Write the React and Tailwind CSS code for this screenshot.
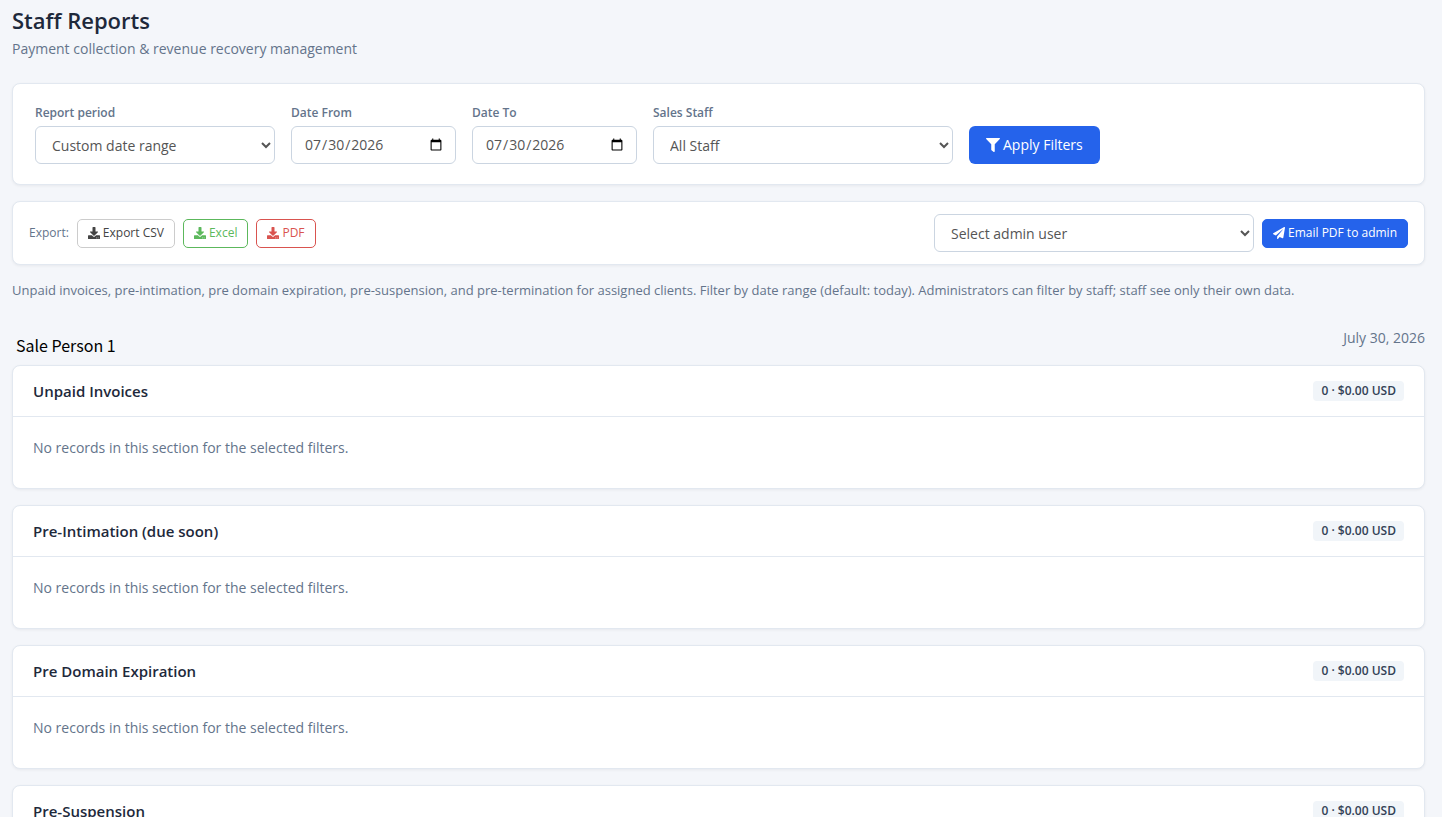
import { useState } from "react";
import { FaDownload, FaFilter, FaPaperPlane } from "react-icons/fa";

const sections = [
    { id: 'unpaid', title: 'Unpaid Invoices', total: '0 · $0.00 USD' },
    { id: 'pre-intimation', title: 'Pre-Intimation (due soon)', total: '0 · $0.00 USD' },
    { id: 'pre-domain', title: 'Pre Domain Expiration', total: '0 · $0.00 USD' },
    { id: 'pre-suspension', title: 'Pre-Suspension', total: '0 · $0.00 USD' },
]

const cardClass = "bg-white border border-[#e2e8f0] rounded-lg shadow-[0_1px_3px_rgba(15,23,42,0.06)]"
const labelClass = "text-xs leading-[18px] font-semibold text-[#64748b]"
const selectClass = "h-[38px] w-full rounded-md border border-[#cbd5e1] bg-white px-3 text-sm text-[#555]"
const dateClass = "h-[38px] w-full rounded-md border border-[#cbd5e1] bg-white pr-[10px] pl-3 text-sm text-[#555]"
const smallButton = "flex h-[29px] items-center gap-[3px] rounded-[5px] border px-[10px] text-xs"

const Field = ({ id, label, className, children }) => (
    <div className={`flex flex-col gap-1 ${className}`}>
        <label htmlFor={id} className={labelClass}>{label}</label>
        {children}
    </div>
)

const Filters = () => {
    const [period, setPeriod] = useState('custom')
    const [dateFrom, setDateFrom] = useState('2026-07-30')
    const [dateTo, setDateTo] = useState('2026-07-30')
    const [staff, setStaff] = useState('all')

    return (
        <form className={`${cardClass} flex flex-wrap items-end gap-4 px-[22px] py-5`} onSubmit={(e) => e.preventDefault()}>
            <Field id="period" label="Report period" className="w-60">
                <select id="period" className={selectClass} value={period} onChange={(e) => setPeriod(e.target.value)}>
                    <option value="custom">Custom date range</option>
                    <option value="today">Today</option>
                    <option value="month">This month</option>
                </select>
            </Field>
            <Field id="date-from" label="Date From" className="w-[165px]">
                <input id="date-from" type="date" className={dateClass} value={dateFrom} onChange={(e) => setDateFrom(e.target.value)} />
            </Field>
            <Field id="date-to" label="Date To" className="w-[165px]">
                <input id="date-to" type="date" className={dateClass} value={dateTo} onChange={(e) => setDateTo(e.target.value)} />
            </Field>
            <Field id="staff" label="Sales Staff" className="w-[300px]">
                <select id="staff" className={selectClass} value={staff} onChange={(e) => setStaff(e.target.value)}>
                    <option value="all">All Staff</option>
                    <option value="1">Sale Person 1</option>
                </select>
            </Field>
            <button type="submit" className="flex h-[38px] items-center gap-[3px] rounded-md bg-[#2563eb] px-[17px] text-sm font-medium text-white">
                <FaFilter />
                Apply Filters
            </button>
        </form>
    )
}

const ExportBar = () => {
    const [admin, setAdmin] = useState('')

    return (
        <div className={`${cardClass} mt-4 flex flex-wrap items-center justify-between gap-2 px-4 py-3`}>
            <div className="flex items-center gap-2">
                <span className="text-xs text-[#64748b]">Export:</span>
                <button type="button" className={`${smallButton} border-[#ccc] text-[#444]`}><FaDownload />Export CSV</button>
                <button type="button" className={`${smallButton} border-[#5cb85c] text-[#5cb85c]`}><FaDownload />Excel</button>
                <button type="button" className={`${smallButton} border-[#d9534f] text-[#d9534f]`}><FaDownload />PDF</button>
            </div>
            <div className="flex items-center gap-2">
                <div className="w-80">
                    <select aria-label="Select admin user" className={selectClass} value={admin} onChange={(e) => setAdmin(e.target.value)}>
                        <option value="">Select admin user</option>
                    </select>
                </div>
                <button type="button" className={`${smallButton} border-[#2563eb] bg-[#2563eb] font-medium text-white`}><FaPaperPlane />Email PDF to admin</button>
            </div>
        </div>
    )
}

const Section = ({ title, total }) => (
    <section className={cardClass}>
        <div className="flex h-[51px] items-center justify-between border-b border-[#e2e8f0] px-5">
            <h2 className="text-[15px] font-semibold text-[#1e293b]">{title}</h2>
            <span className="rounded bg-[#f1f5f9] px-2 text-xs leading-5 font-semibold text-[#334155]">{total}</span>
        </div>
        <p className="px-5 pt-5 pb-[30px] text-sm leading-[21px] text-[#64748b]">No records in this section for the selected filters.</p>
    </section>
)

const App = () => {
    return (
        <div className="min-h-screen bg-[#f4f6fa] pt-2 pr-[17px] pb-4 pl-3 font-['Open_Sans',sans-serif]">
            <h1 className="text-[22px] leading-6 font-semibold text-[#1e293b]">Staff Reports</h1>
            <p className="mt-[6px] mb-6 text-sm leading-[21px] text-[#64748b]">Payment collection &amp; revenue recovery management</p>
            <Filters />
            <ExportBar />
            <p className="mt-[15px] text-[13px] leading-5 text-[#64748b]">
                Unpaid invoices, pre-intimation, pre domain expiration, pre-suspension, and pre-termination for assigned clients. Filter by date range (default: today). Administrators can filter by staff; staff see only their own data.
            </p>
            <div className="mt-7 mb-2 flex items-start justify-between">
                <div className="px-1 pt-[5px] font-['Noto_Sans_CJK_SC',sans-serif] text-base leading-6 text-black">Sale Person 1</div>
                <div className="text-sm leading-5 text-[#64748b]">July 30, 2026</div>
            </div>
            <div className="flex flex-col gap-4">
                {sections.map((section) => (
                    <Section key={section.id} title={section.title} total={section.total} />
                ))}
            </div>
        </div>
    )
}

export default App;
